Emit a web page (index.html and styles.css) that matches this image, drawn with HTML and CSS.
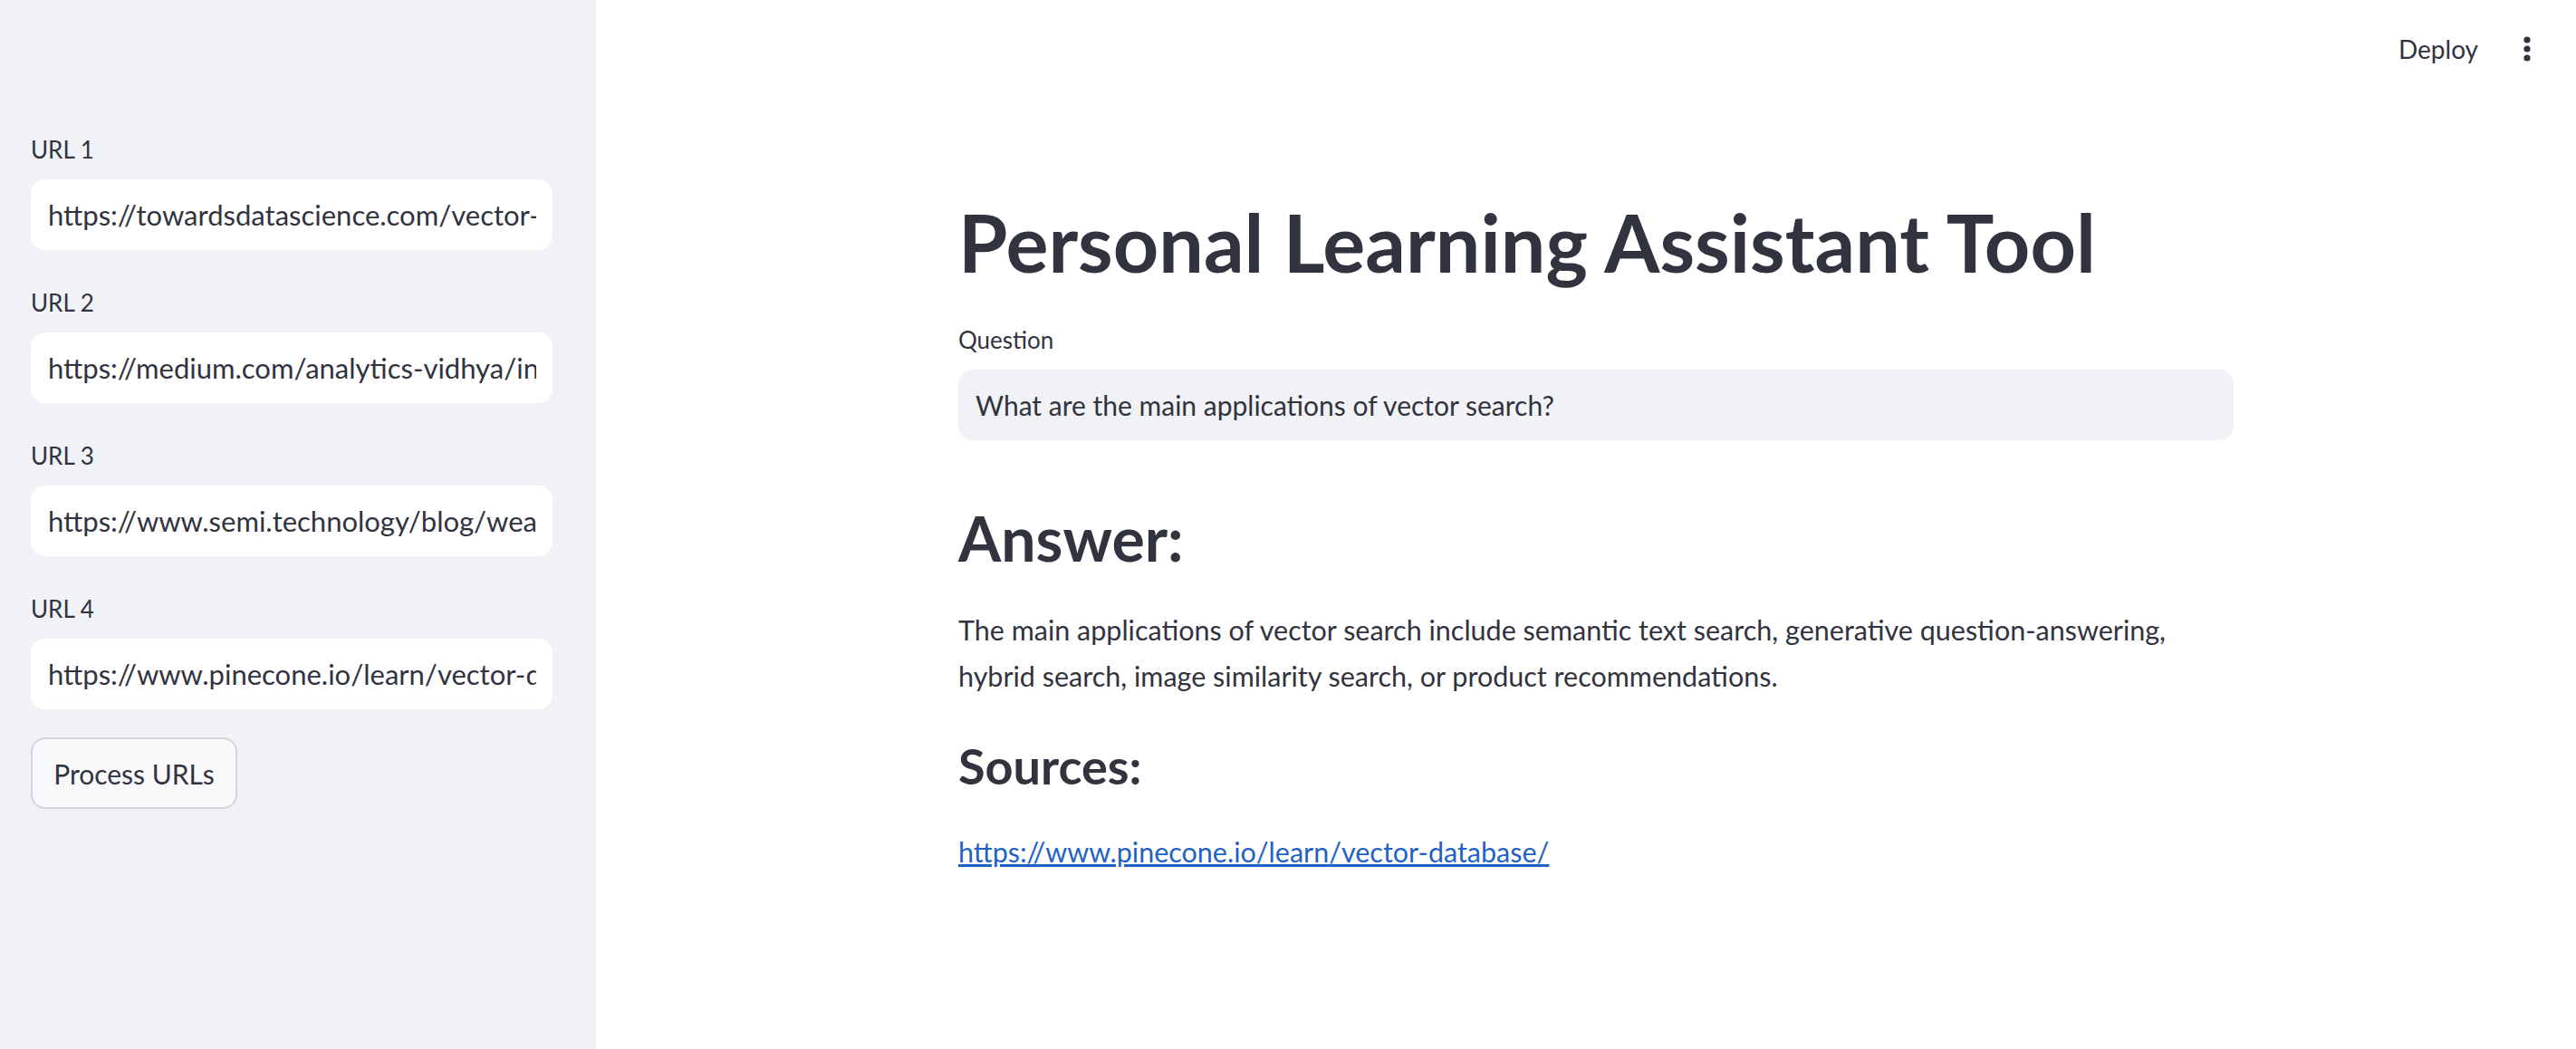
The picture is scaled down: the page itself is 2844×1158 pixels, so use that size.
FILE: index.html
```html
<!DOCTYPE html>
<html lang="en">
<head>
<meta charset="utf-8">
<title>Personal Learning Assistant Tool</title>
<link rel="stylesheet" href="styles.css">
</head>
<body>
<div class="app">
  <aside class="sidebar">
    <div class="field">
      <label class="label">URL 1</label>
      <input class="url-input" type="text" value="https://towardsdatascience.com/vector-database-what-is-it-and-why-you-should-know-it">
    </div>
    <div class="field">
      <label class="label">URL 2</label>
      <input class="url-input" type="text" value="https://medium.com/analytics-vidhya/introduction-to-vector-search">
    </div>
    <div class="field">
      <label class="label">URL 3</label>
      <input class="url-input" type="text" value="https://www.semi.technology/blog/weaviate-vector-search-engine">
    </div>
    <div class="field">
      <label class="label">URL 4</label>
      <input class="url-input" type="text" value="https://www.pinecone.io/learn/vector-database/">
    </div>
    <button class="btn" type="button">Process URLs</button>
  </aside>
  <main class="main">
    <header class="toolbar">
      <span class="deploy">Deploy</span>
      <span class="menu" aria-label="Main menu">
        <svg width="12" height="30" viewBox="0 0 12 30"><circle cx="6" cy="5" r="3.6" fill="#31333f"/><circle cx="6" cy="15" r="3.6" fill="#31333f"/><circle cx="6" cy="25" r="3.6" fill="#31333f"/></svg>
      </span>
    </header>
    <div class="content">
      <h1 class="title">Personal Learning Assistant Tool</h1>
      <label class="label q-label">Question</label>
      <input class="q-input" type="text" value="What are the main applications of vector search?">
      <h2 class="h2">Answer:</h2>
      <p class="answer">The main applications of vector search include semantic text search, generative question-answering, hybrid search, image similarity search, or product recommendations.</p>
      <h3 class="h3">Sources:</h3>
      <a class="link" href="#">https://www.pinecone.io/learn/vector-database/</a>
    </div>
  </main>
</div>
</body>
</html>
```

FILE: styles.css
```css
html, body {
  margin: 0;
  padding: 0;
  background: #ffffff;
}
body {
  font-family: "Lato", "Noto Sans", sans-serif;
  color: #31333f;
}
.app {
  display: flex;
  height: 1158px;
  overflow: hidden;
}
.sidebar {
  width: 658px;
  flex: none;
  box-sizing: border-box;
  background: #f0f2f6;
  padding: 147px 48px 0 34px;
  display: flex;
  flex-direction: column;
  gap: 40px;
}
.field {
  display: flex;
  flex-direction: column;
}
.label {
  display: block;
  font-size: 26px;
  line-height: 36px;
  margin-bottom: 15px;
  color: #31333f;
}
.url-input, .q-input {
  box-sizing: border-box;
  height: 78px;
  border: none;
  outline: none;
  border-radius: 16px;
  padding: 0 18px 0 19px;
  font-family: inherit;
  font-size: 30px;
  color: #31333f;
}
.url-input {
  width: 576px;
  background: #ffffff;
  font-size: 31px;
}
.btn {
  align-self: flex-start;
  margin-top: -9px;
  width: 228px;
  height: 79px;
  box-sizing: border-box;
  border: 2px solid #d4d5da;
  border-radius: 16px;
  background: #f9f9fb;
  font-family: inherit;
  font-size: 30px;
  color: #31333f;
  padding: 0;
}
.main {
  flex: 1;
  display: flex;
  flex-direction: column;
  padding-left: 400px;
}
.toolbar {
  display: flex;
  justify-content: flex-end;
  align-items: center;
  height: 108px;
  padding-right: 48px;
  gap: 48px;
}
.deploy {
  font-size: 28px;
}
.menu {
  display: flex;
}
.content {
  width: 1408px;
  display: flex;
  flex-direction: column;
  align-items: flex-start;
  padding-top: 107px;
}
.title {
  margin: 0;
  font-size: 88px;
  font-weight: 700;
  line-height: 1.2;
}
.q-label {
  margin-top: 36px;
}
.q-input {
  width: 1408px;
  background: #f0f2f6;
}
.h2 {
  margin: 67px 0 0;
  font-size: 68px;
  font-weight: 700;
  line-height: 1.2;
}
.answer {
  margin: 36px 0 0;
  font-size: 30.5px;
  line-height: 51px;
}
.h3 {
  margin: 42px 0 0;
  font-size: 54px;
  font-weight: 700;
  line-height: 1.2;
}
.link {
  margin-top: 36px;
  font-size: 30.5px;
  line-height: 51px;
  color: #1f62c6;
}
```
